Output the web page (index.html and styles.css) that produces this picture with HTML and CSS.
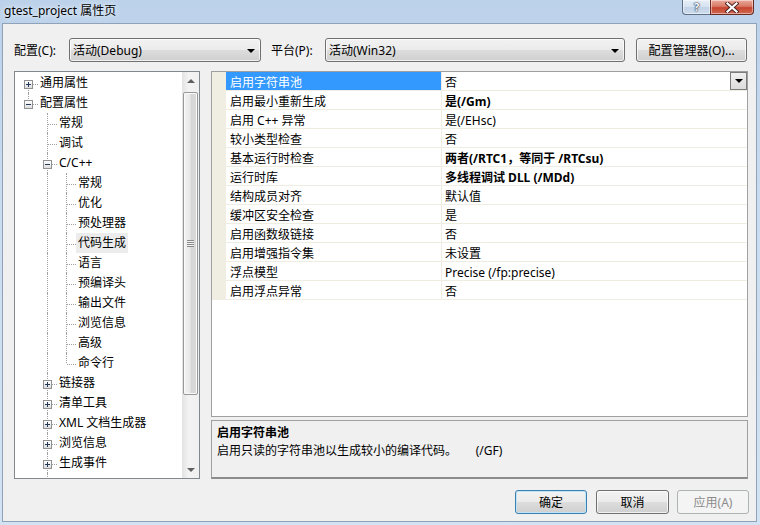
FILE: index.html
```html
<!DOCTYPE html>
<html lang="zh-CN">
<head>
    <meta charset="UTF-8">
    <title>gtest_project 属性页</title>
    <link rel="stylesheet" href="styles.css">
</head>
<body>
    <div class="window">
        <div class="titlebar">
            <div class="title">gtest_project 属性页</div>
            <div class="caption">
                <div class="cap-btn cap-help">?</div>
                <div class="cap-btn cap-close">
                    <svg width="14" height="11" viewBox="0 0 14 11">
                        <path d="M2.5 1.5 L11.5 9.5 M11.5 1.5 L2.5 9.5" stroke="#4a2020" stroke-width="4" stroke-linecap="square"/>
                        <path d="M2.5 1.5 L11.5 9.5 M11.5 1.5 L2.5 9.5" stroke="#fff" stroke-width="2.2" stroke-linecap="square"/>
                    </svg>
                </div>
            </div>
        </div>

        <div class="client">
            <div class="toolbar">
                <span class="field-label">配置(C):</span>
                <div class="combo combo-config">活动(Debug)<span class="caret"></span></div>
                <span class="field-label field-label-2">平台(P):</span>
                <div class="combo combo-platform">活动(Win32)<span class="caret"></span></div>
                <div class="btn btn-manager">配置管理器(O)...</div>
            </div>

            <div class="main">
                <div class="tree">
                    <div class="tree-items">
                        <div class="tree-row"><span class="ind head"><span class="box plus"></span></span><span class="node">通用属性</span></div>
                        <div class="tree-row"><span class="ind end"><span class="box"></span></span><span class="node">配置属性</span></div>
                        <div class="tree-row"><span class="ind"></span><span class="ind tee"></span><span class="node">常规</span></div>
                        <div class="tree-row"><span class="ind"></span><span class="ind tee"></span><span class="node">调试</span></div>
                        <div class="tree-row"><span class="ind"></span><span class="ind tee"><span class="box"></span></span><span class="node">C/C++</span></div>
                        <div class="tree-row"><span class="ind"></span><span class="ind pipe"></span><span class="ind tee"></span><span class="node">常规</span></div>
                        <div class="tree-row"><span class="ind"></span><span class="ind pipe"></span><span class="ind tee"></span><span class="node">优化</span></div>
                        <div class="tree-row"><span class="ind"></span><span class="ind pipe"></span><span class="ind tee"></span><span class="node">预处理器</span></div>
                        <div class="tree-row"><span class="ind"></span><span class="ind pipe"></span><span class="ind tee"></span><span class="node selected">代码生成</span></div>
                        <div class="tree-row"><span class="ind"></span><span class="ind pipe"></span><span class="ind tee"></span><span class="node">语言</span></div>
                        <div class="tree-row"><span class="ind"></span><span class="ind pipe"></span><span class="ind tee"></span><span class="node">预编译头</span></div>
                        <div class="tree-row"><span class="ind"></span><span class="ind pipe"></span><span class="ind tee"></span><span class="node">输出文件</span></div>
                        <div class="tree-row"><span class="ind"></span><span class="ind pipe"></span><span class="ind tee"></span><span class="node">浏览信息</span></div>
                        <div class="tree-row"><span class="ind"></span><span class="ind pipe"></span><span class="ind tee"></span><span class="node">高级</span></div>
                        <div class="tree-row"><span class="ind"></span><span class="ind pipe"></span><span class="ind end"></span><span class="node">命令行</span></div>
                        <div class="tree-row"><span class="ind"></span><span class="ind tee"><span class="box plus"></span></span><span class="node">链接器</span></div>
                        <div class="tree-row"><span class="ind"></span><span class="ind tee"><span class="box plus"></span></span><span class="node">清单工具</span></div>
                        <div class="tree-row"><span class="ind"></span><span class="ind tee"><span class="box plus"></span></span><span class="node">XML 文档生成器</span></div>
                        <div class="tree-row"><span class="ind"></span><span class="ind tee"><span class="box plus"></span></span><span class="node">浏览信息</span></div>
                        <div class="tree-row"><span class="ind"></span><span class="ind tee"><span class="box plus"></span></span><span class="node">生成事件</span></div>
                        <div class="tree-row"><span class="ind"></span><span class="ind tee"><span class="box plus"></span></span><span class="node"></span></div>
                    </div>
                    <div class="vscroll">
                        <div class="sb-arrow"><span class="tri-up"></span></div>
                        <div class="sb-track">
                            <div class="sb-thumb"><span class="grip"></span></div>
                        </div>
                        <div class="sb-arrow"><span class="tri-down"></span></div>
                    </div>
                </div>

                <div class="panel">
                    <div class="grid">
                        <div class="prop selected"><span class="gutter"></span><span class="pname">启用字符串池</span><span class="pval">否<span class="drop"><span class="caret"></span></span></span></div>
                        <div class="prop"><span class="gutter"></span><span class="pname">启用最小重新生成</span><span class="pval bold">是(/Gm)</span></div>
                        <div class="prop"><span class="gutter"></span><span class="pname">启用 C++ 异常</span><span class="pval">是(/EHsc)</span></div>
                        <div class="prop"><span class="gutter"></span><span class="pname">较小类型检查</span><span class="pval">否</span></div>
                        <div class="prop"><span class="gutter"></span><span class="pname">基本运行时检查</span><span class="pval bold">两者(/RTC1，等同于 /RTCsu)</span></div>
                        <div class="prop"><span class="gutter"></span><span class="pname">运行时库</span><span class="pval bold">多线程调试 DLL (/MDd)</span></div>
                        <div class="prop"><span class="gutter"></span><span class="pname">结构成员对齐</span><span class="pval">默认值</span></div>
                        <div class="prop"><span class="gutter"></span><span class="pname">缓冲区安全检查</span><span class="pval">是</span></div>
                        <div class="prop"><span class="gutter"></span><span class="pname">启用函数级链接</span><span class="pval">否</span></div>
                        <div class="prop"><span class="gutter"></span><span class="pname">启用增强指令集</span><span class="pval">未设置</span></div>
                        <div class="prop"><span class="gutter"></span><span class="pname">浮点模型</span><span class="pval">Precise (/fp:precise)</span></div>
                        <div class="prop"><span class="gutter"></span><span class="pname">启用浮点异常</span><span class="pval">否</span></div>
                    </div>
                    <div class="splitter"></div>
                    <div class="desc">
                        <div class="desc-title">启用字符串池</div>
                        <div class="desc-text">启用只读的字符串池以生成较小的编译代码。      (/GF)</div>
                    </div>
                </div>
            </div>

            <div class="actions">
                <div class="btn btn-default">确定</div>
                <div class="btn btn-cancel">取消</div>
                <div class="btn btn-disabled">应用(A)</div>
            </div>
        </div>
    </div>
</body>
</html>
```

FILE: styles.css
```css
body {
    margin: 0;
    font-family: "Noto Sans", "Noto Sans CJK SC", sans-serif;
    font-size: 12px;
    color: #000;
}
.window {
    width: 760px;
    height: 525px;
    display: flex;
    flex-direction: column;
    overflow: hidden;
    background: linear-gradient(180deg, #bcd2ea 0%, #cadcf0 40%, #d3e3f3 100%);
}

/* title bar */
.titlebar {
    height: 23px;
    flex: none;
    display: flex;
}
.title {
    flex: 1;
    padding-left: 4px;
    line-height: 22px;
    text-shadow: 0 0 6px #e8f0fa, 0 0 3px #e8f0fa;
}
.caption {
    display: flex;
    align-self: flex-start;
    margin-right: 6px;
}
.cap-btn {
    height: 15px;
    box-sizing: border-box;
    border: 1px solid #5f6f86;
    border-top: none;
    display: flex;
    align-items: center;
    justify-content: center;
    box-shadow: inset 0 0 0 1px rgba(255,255,255,0.45);
}
.cap-help {
    width: 28px;
    border-radius: 0 0 0 4px;
    border-right: none;
    background: linear-gradient(180deg, #e6eef8 0%, #d7e3f1 50%, #c3d3e6 51%, #cddbec 100%);
    color: #fff;
    font-weight: bold;
    font-size: 11px;
    line-height: 14px;
    text-shadow: 0 0 1px #2c3d55, 0 0 1px #2c3d55, 0 0 2px #2c3d55;
}
.cap-close {
    width: 44px;
    border-color: #6a2a22;
    border-radius: 0 0 4px 0;
    background: linear-gradient(180deg, #e9a99b 0%, #d97a67 45%, #c5442e 55%, #d26a52 100%);
}

/* client area */
.client {
    flex: 1;
    margin: 0 3px 3px 2px;
    border: 1px solid #8fa2b8;
    background: #f0f0f0;
    padding: 14px 8px 7px 11px;
    display: flex;
    flex-direction: column;
}
.toolbar {
    height: 24px;
    display: flex;
    align-items: center;
}
.field-label {
    width: 55px;
    line-height: 24px;
    padding-top: 1px;
}
.field-label-2 {
    width: 54px;
    margin-left: 10px;
}
.combo, .btn {
    height: 24px;
    box-sizing: border-box;
    border: 1px solid #707070;
    border-radius: 3px;
    background: linear-gradient(180deg, #f2f2f2 0%, #ebebeb 50%, #dddddd 51%, #cfcfcf 100%);
    box-shadow: inset 0 0 0 1px rgba(255,255,255,0.7);
}
.combo {
    display: flex;
    align-items: center;
    padding-left: 3px;
    padding-top: 1px;
    line-height: 22px;
}
.combo-config {
    width: 192px;
}
.combo-platform {
    width: 300px;
}
.caret {
    margin-left: auto;
    margin-right: 5px;
    width: 0;
    height: 0;
    border-left: 4px solid transparent;
    border-right: 4px solid transparent;
    border-top: 4px solid #000;
}
.btn {
    width: 72px;
    text-align: center;
    line-height: 22px;
    padding-top: 1px;
}
.btn-manager {
    width: 111px;
    margin-left: 11px;
}

/* tree + property grid */
.main {
    display: flex;
    gap: 11px;
    margin-top: 9px;
    height: 408px;
}
.tree {
    width: 186px;
    box-sizing: border-box;
    border: 1px solid #828790;
    background: #fff;
    display: flex;
}
.tree-items {
    flex: 1;
    padding: 1px 0 0 4px;
    overflow: hidden;
}
.tree-row {
    height: 20px;
    display: flex;
}
.ind {
    width: 19px;
    height: 20px;
    flex: none;
    position: relative;
}
.ind.pipe::before, .ind.tee::before, .ind.end::before, .ind.head::before {
    content: '';
    position: absolute;
    left: 9px;
    top: 0;
    height: 20px;
    border-left: 1px dotted #a0a0a0;
}
.ind.end::before {
    height: 10px;
}
.ind.head::before {
    top: 10px;
    height: 10px;
}
.ind.tee::after, .ind.end::after, .ind.head::after {
    content: '';
    position: absolute;
    left: 10px;
    top: 11px;
    width: 9px;
    border-top: 1px dotted #a0a0a0;
}
.box {
    position: absolute;
    left: 5px;
    top: 7px;
    width: 7px;
    height: 7px;
    border: 1px solid #919191;
    background: linear-gradient(180deg, #ffffff, #dedede);
    z-index: 1;
}
.box::before, .box.plus::after {
    content: '';
    position: absolute;
    background: #26385a;
}
.box::before {
    left: 1px;
    top: 3px;
    width: 5px;
    height: 1px;
}
.box.plus::after {
    left: 3px;
    top: 1px;
    width: 1px;
    height: 5px;
}
.node {
    padding: 0 2px;
    line-height: 20px;
    white-space: nowrap;
}
.node.selected {
    background: #ececec;
}

/* tree scrollbar */
.vscroll {
    width: 17px;
    flex: none;
    display: flex;
    flex-direction: column;
    background: linear-gradient(90deg, #e3e3e3, #f3f3f3 40%, #f0f0f0);
}
.sb-arrow {
    height: 17px;
    display: flex;
    align-items: center;
    justify-content: center;
}
.tri-up, .tri-down {
    width: 0;
    height: 0;
    border-left: 4px solid transparent;
    border-right: 4px solid transparent;
}
.tri-up {
    border-bottom: 4px solid #606060;
}
.tri-down {
    border-top: 4px solid #606060;
}
.sb-track {
    flex: 1;
    padding-top: 3px;
}
.sb-thumb {
    height: 303px;
    margin: 0 1px;
    box-sizing: border-box;
    border: 1px solid #989898;
    border-radius: 2px;
    background: linear-gradient(90deg, #f3f3f3 0%, #e8e8e8 45%, #d6d6d6 55%, #d9d9d9 100%);
    box-shadow: inset 0 0 0 1px #fafafa;
    display: flex;
    align-items: center;
    justify-content: center;
}
.grip {
    width: 7px;
    height: 7px;
    background: repeating-linear-gradient(180deg, #8a8a8a 0, #8a8a8a 1px, #f2f2f2 1px, #f2f2f2 2px);
}

.panel {
    width: 537px;
    display: flex;
    flex-direction: column;
}
.grid {
    height: 346px;
    box-sizing: border-box;
    border: 1px solid #a0a0a0;
    background: #fff;
}
.prop {
    display: grid;
    grid-template-columns: 14px 216px 1fr;
    height: 19px;
}
.gutter {
    background: #f0ede2;
}
.pname, .pval {
    height: 16px;
    padding-top: 2px;
    line-height: 18px;
    border-bottom: 1px solid #efece1;
    white-space: nowrap;
}
.pname {
    padding-left: 4px;
    border-right: 1px solid #efece1;
}
.pval {
    padding-left: 3px;
    display: flex;
}
.bold {
    font-weight: bold;
}
.prop.selected .pname {
    background: #3399ff;
    color: #fff;
}
.prop.selected .pval {
    position: relative;
}
.drop {
    position: absolute;
    right: 0;
    top: 0;
    width: 17px;
    height: 18px;
    box-sizing: border-box;
    border: 1px solid #7c7c7c;
    background: linear-gradient(180deg, #f0f0f0, #dcdcdc);
    display: flex;
    align-items: center;
}
.drop .caret {
    margin: 0 auto;
}
.splitter {
    height: 3px;
}
.desc {
    flex: 1;
    border: 1px solid #a0a0a0;
    border-bottom: 2px solid #8c8c8c;
    padding: 3px 5px;
}
.desc-title {
    font-weight: bold;
    line-height: 18px;
}
.desc-text {
    line-height: 18px;
    white-space: pre;
}

/* dialog buttons */
.actions {
    display: flex;
    justify-content: flex-end;
    gap: 8px;
    margin-top: 11px;
    margin-right: -1px;
}
.btn-default {
    border-color: #3c7fb1;
    box-shadow: inset 0 0 0 1px #bfe3f7;
    margin-right: 1px;
}
.btn-cancel {
    width: 73px;
}
.btn-disabled {
    border-color: #adb2b5;
    background: #f4f4f4;
    color: #8b8b8b;
    box-shadow: none;
}
```
